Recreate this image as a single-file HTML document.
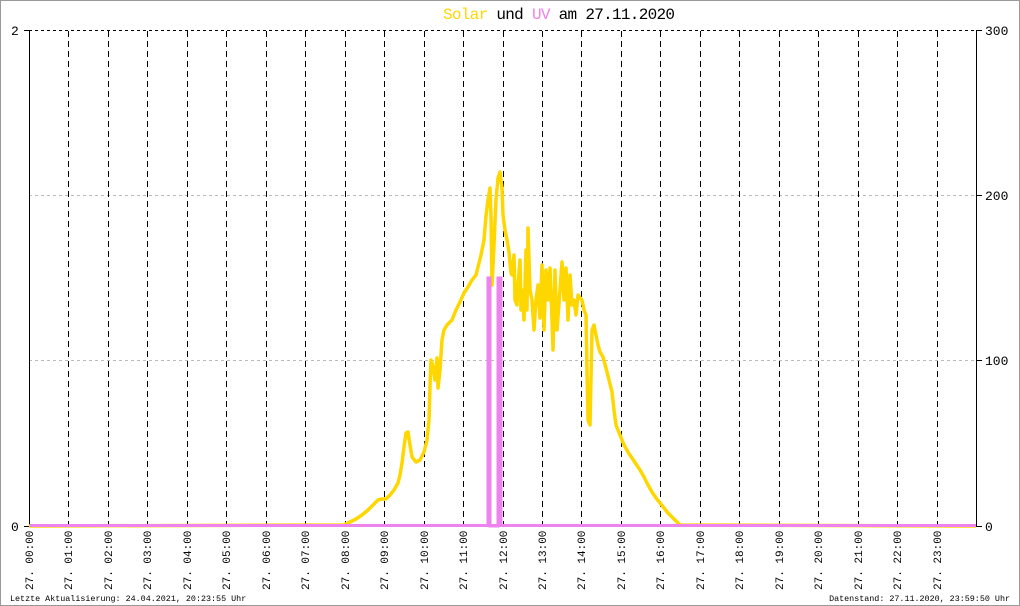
<!DOCTYPE html>
<html><head><meta charset="utf-8"><style>
html,body{margin:0;padding:0;background:#fff}
svg{display:block}
text{font-family:"Liberation Mono",monospace}
</style></head><body>
<svg width="1020" height="606" xmlns="http://www.w3.org/2000/svg">
<rect x="0.5" y="0.5" width="1019" height="605" fill="#fff" stroke="#999"/>
<text x="443" y="19" font-size="16" letter-spacing="1" textLength="233"><tspan fill="#ffd700">Solar</tspan><tspan fill="#000"> und </tspan><tspan fill="#ee82ee">UV</tspan><tspan fill="#000"> am 27.11.2020</tspan></text>
<g stroke="#000" stroke-width="1" stroke-dasharray="3,3" shape-rendering="crispEdges">
<line x1="29" y1="30.5" x2="976" y2="30.5"/>
</g>
<g stroke="#bbb" stroke-width="1" stroke-dasharray="3,3" shape-rendering="crispEdges">
<line x1="29" y1="195.5" x2="976" y2="195.5"/>
<line x1="29" y1="360.5" x2="976" y2="360.5"/>
</g>
<g stroke="#000" stroke-width="1" stroke-dasharray="6,4" shape-rendering="crispEdges" id="vl"></g>
<line x1="29.5" y1="30" x2="29.5" y2="527" stroke="#000" shape-rendering="crispEdges"/>
<line x1="976.5" y1="30" x2="976.5" y2="527" stroke="#000" shape-rendering="crispEdges"/>
<line x1="24" y1="30.5" x2="30" y2="30.5" stroke="#000" shape-rendering="crispEdges"/>
<line x1="24" y1="526.5" x2="30" y2="526.5" stroke="#000" shape-rendering="crispEdges"/>
<line x1="976" y1="30.5" x2="982" y2="30.5" stroke="#000" shape-rendering="crispEdges"/>
<line x1="976" y1="195.5" x2="982" y2="195.5" stroke="#000" shape-rendering="crispEdges"/>
<line x1="976" y1="360.5" x2="982" y2="360.5" stroke="#000" shape-rendering="crispEdges"/>
<line x1="976" y1="526.5" x2="982" y2="526.5" stroke="#000" shape-rendering="crispEdges"/>
<g font-size="13" fill="#000">
<text x="11" y="35">2</text>
<text x="11" y="531">0</text>
<text x="985" y="35">300</text>
<text x="985" y="200">200</text>
<text x="985" y="365">100</text>
<text x="985" y="531">0</text>
</g>
<polyline fill="none" stroke="#ffd700" stroke-width="3.5" stroke-linejoin="round" points="29,526 344,525 350,522 356,519 362,515 368,510 373,505 378,500 382,499 386,499 390,495 394,490 398,483 400,475 402,463 404,447 406,433 408,432 410,445 412,457 416,462 420,460 424,452 427,440 429,420 430,385 431,360 433,367 435,380 437,358 438,388 440,370 442,340 444,330 447,325 452,320 456,310 460,302 464,293 468,287 472,280 476,275 478,267 481,255 484,240 486,216 488,200 490,188 491,215 492,285 494,245 496,200 498,178 500,172 502,188 503,215 505,230 507,240 509,252 511,273 512,275 514,255 515,300 517,305 518,285 520,260 521,310 522,290 524,320 526,250 527,310 528,228 530,290 532,300 534,330 536,300 538,285 540,318 542,265 544,330 546,270 548,300 550,268 552,320 553,350 555,270 557,330 560,290 562,262 564,300 566,268 568,320 570,275 572,305 574,300 576,315 578,295 580,298 582,300 584,310 586,315 587,370 588,420 590,425 592,330 594,325 596,335 598,345 600,352 603,357 606,368 609,380 612,392 614,410 616,425 618,430 620,435 624,445 628,452 632,458 636,464 640,470 644,477 648,485 652,492 656,498 660,503 664,508 668,513 672,517 676,521 680,525 976,526"/>
<line x1="30" y1="525.5" x2="976" y2="525.5" stroke="#ee82ee" stroke-width="3"/>
<polyline fill="none" stroke="#ee82ee" stroke-width="3" points="488,526 488,278 490,278 490,526 498,526 498,278 501,278 501,526"/>
<g id="xl" font-size="11" fill="#000"></g>
<text x="10" y="601" font-size="8.4" fill="#000">Letzte Aktualisierung: 24.04.2021, 20:23:55 Uhr</text>
<text x="1010" y="601" font-size="8.4" fill="#000" text-anchor="end">Datenstand: 27.11.2020, 23:59:50 Uhr</text>
<script>
var vl=document.getElementById('vl'),xl=document.getElementById('xl'),ns='http://www.w3.org/2000/svg';
for(var h=0;h<24;h++){var x=Math.round(29+h*39.46);
if(h>0){var l=document.createElementNS(ns,'line');l.setAttribute('x1',x+.5);l.setAttribute('x2',x+.5);l.setAttribute('y1',31);l.setAttribute('y2',526);vl.appendChild(l);}
var t=document.createElementNS(ns,'text');t.setAttribute('transform','translate('+(x+4)+',590) rotate(-90)');t.textContent='27. '+(h<10?'0':'')+h+':00';xl.appendChild(t);}
</script>
</svg>
</body></html>
